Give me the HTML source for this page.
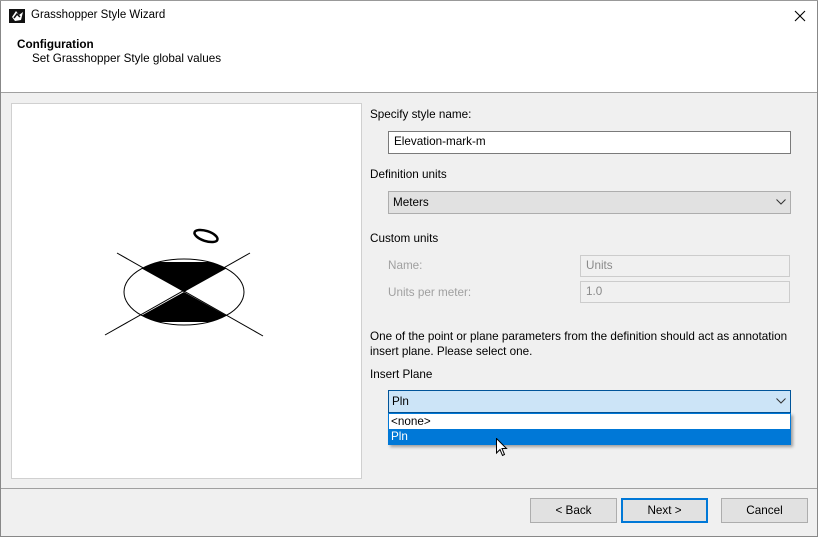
<!DOCTYPE html>
<html><head><meta charset="utf-8"><style>
*{box-sizing:border-box;margin:0;padding:0}
body{width:818px;height:537px;background:#f0f0f0;font-family:"Liberation Sans",sans-serif;font-size:11.7px;color:#000;position:relative;overflow:hidden}
.a{position:absolute}
.t{position:absolute;white-space:nowrap}
</style></head><body>
<div class="a" style="left:0;top:0;width:818px;height:537px;border:1px solid #888;border-top:none"></div>
<div class="a" style="left:1px;top:0;width:816px;height:93px;background:#fff;border-bottom:1px solid #a0a0a0"></div>
<div class="a" style="left:0;top:0;width:818px;height:1px;background:#999"></div>
<svg class="a" style="left:9px;top:8px" width="16" height="16" viewBox="0 0 16 16"><rect x="0" y="1" width="16" height="14" fill="#111"/><path d="M3 9 L7 3 L10 7 L14 4 L12 12 L6 13 Z" fill="#fff"/><path d="M5 10 L8 6 L11 9" stroke="#111" stroke-width="1.5" fill="none"/></svg>
<div class="t" style="left:31px;top:9px;font-size:11.5px">Grasshopper Style Wizard</div>
<svg class="a" style="left:794px;top:10px" width="12" height="12"><path d="M1 1L11 11M11 1L1 11" stroke="#000" stroke-width="1.1"/></svg>
<div class="t" style="left:17px;top:38px;font-weight:bold">Configuration</div>
<div class="t" style="left:32px;top:52px">Set Grasshopper Style global values</div>

<div class="a" style="left:11px;top:103px;width:351px;height:376px;background:#fff;border:1px solid #d0d0d0"></div>
<svg class="a" style="left:0;top:0" width="370" height="480">
<defs><clipPath id="c"><ellipse cx="184" cy="292" rx="60" ry="33"/></clipPath></defs>
<g clip-path="url(#c)"><polygon points="130,262 238,262 184,292" fill="#000"/><polygon points="130,322 238,322 184,292" fill="#000"/></g>
<polygon points="143,268 225,268 184,292" fill="#000"/>
<ellipse cx="184" cy="292" rx="60" ry="33" fill="none" stroke="#000" stroke-width="1"/>
<line x1="117" y1="253" x2="263" y2="336" stroke="#000" stroke-width="1"/>
<line x1="105" y1="335" x2="250" y2="253" stroke="#000" stroke-width="1"/>
<ellipse cx="206" cy="236" rx="12" ry="5" transform="rotate(18 206 236)" fill="none" stroke="#000" stroke-width="2.5"/>
</svg>

<div class="t" style="left:370px;top:108px">Specify style name:</div>
<div class="a" style="left:388px;top:131px;width:403px;height:23px;background:#fff;border:1px solid #7a7a7a"></div>
<div class="t" style="left:394px;top:135px">Elevation-mark-m</div>
<div class="t" style="left:370px;top:168px">Definition units</div>
<div class="a" style="left:388px;top:191px;width:403px;height:23px;background:#e1e1e1;border:1px solid #adadad"></div>
<div class="t" style="left:393px;top:196px">Meters</div>
<svg class="a" style="left:776px;top:199px" width="10" height="6"><path d="M0.5 0.5L5 5L9.5 0.5" stroke="#333" fill="none"/></svg>
<div class="t" style="left:370px;top:232px">Custom units</div>
<div class="t" style="left:388px;top:259px;color:#a0a0a0">Name:</div>
<div class="a" style="left:580px;top:255px;width:210px;height:22px;background:#f0f0f0;border:1px solid #ccc"></div>
<div class="t" style="left:586px;top:259px;color:#8a8a8a">Units</div>
<div class="t" style="left:388px;top:286px;color:#a0a0a0">Units per meter:</div>
<div class="a" style="left:580px;top:281px;width:210px;height:22px;background:#f0f0f0;border:1px solid #ccc"></div>
<div class="t" style="left:586px;top:285px;color:#8a8a8a">1.0</div>
<div class="t" style="left:370px;top:330px">One of the point or plane parameters from the definition should act as annotation</div>
<div class="t" style="left:370px;top:345px">insert plane. Please select one.</div>
<div class="t" style="left:370px;top:368px">Insert Plane</div>
<div class="a" style="left:388px;top:390px;width:403px;height:23px;background:#cce4f7;border:1px solid #005499"></div>
<div class="t" style="left:392px;top:395px">Pln</div>
<svg class="a" style="left:776px;top:398px" width="10" height="6"><path d="M0.5 0.5L5 5L9.5 0.5" stroke="#333" fill="none"/></svg>
<div class="a" style="left:388px;top:413px;width:403px;height:32px;background:#fff;border:1px solid #0078d7;box-shadow:2px 2px 3px rgba(0,0,0,.35)"></div>
<div class="t" style="left:391px;top:415px">&lt;none&gt;</div>
<div class="a" style="left:389px;top:429px;width:401px;height:15px;background:#0078d7"></div>
<div class="t" style="left:391px;top:430px;color:#fff">Pln</div>
<svg class="a" style="left:496px;top:438px" width="12" height="19"><path d="M0.5 0.5L0.5 15L4 11.5L6.5 17.5L8.5 16.5L6 10.5L10.5 10.5Z" fill="#fff" stroke="#000"/></svg>

<div class="a" style="left:1px;top:488px;width:816px;height:1px;background:#a0a0a0"></div>
<div class="a" style="left:530px;top:498px;width:87px;height:25px;background:#e1e1e1;border:1px solid #adadad"></div>
<div class="t" style="left:530px;top:504px;width:87px;text-align:center">&lt; Back</div>
<div class="a" style="left:621px;top:498px;width:87px;height:25px;background:#e1e1e1;border:2px solid #0078d7"></div>
<div class="t" style="left:621px;top:504px;width:87px;text-align:center">Next &gt;</div>
<div class="a" style="left:721px;top:498px;width:87px;height:25px;background:#e1e1e1;border:1px solid #adadad"></div>
<div class="t" style="left:721px;top:504px;width:87px;text-align:center">Cancel</div>
</body></html>
